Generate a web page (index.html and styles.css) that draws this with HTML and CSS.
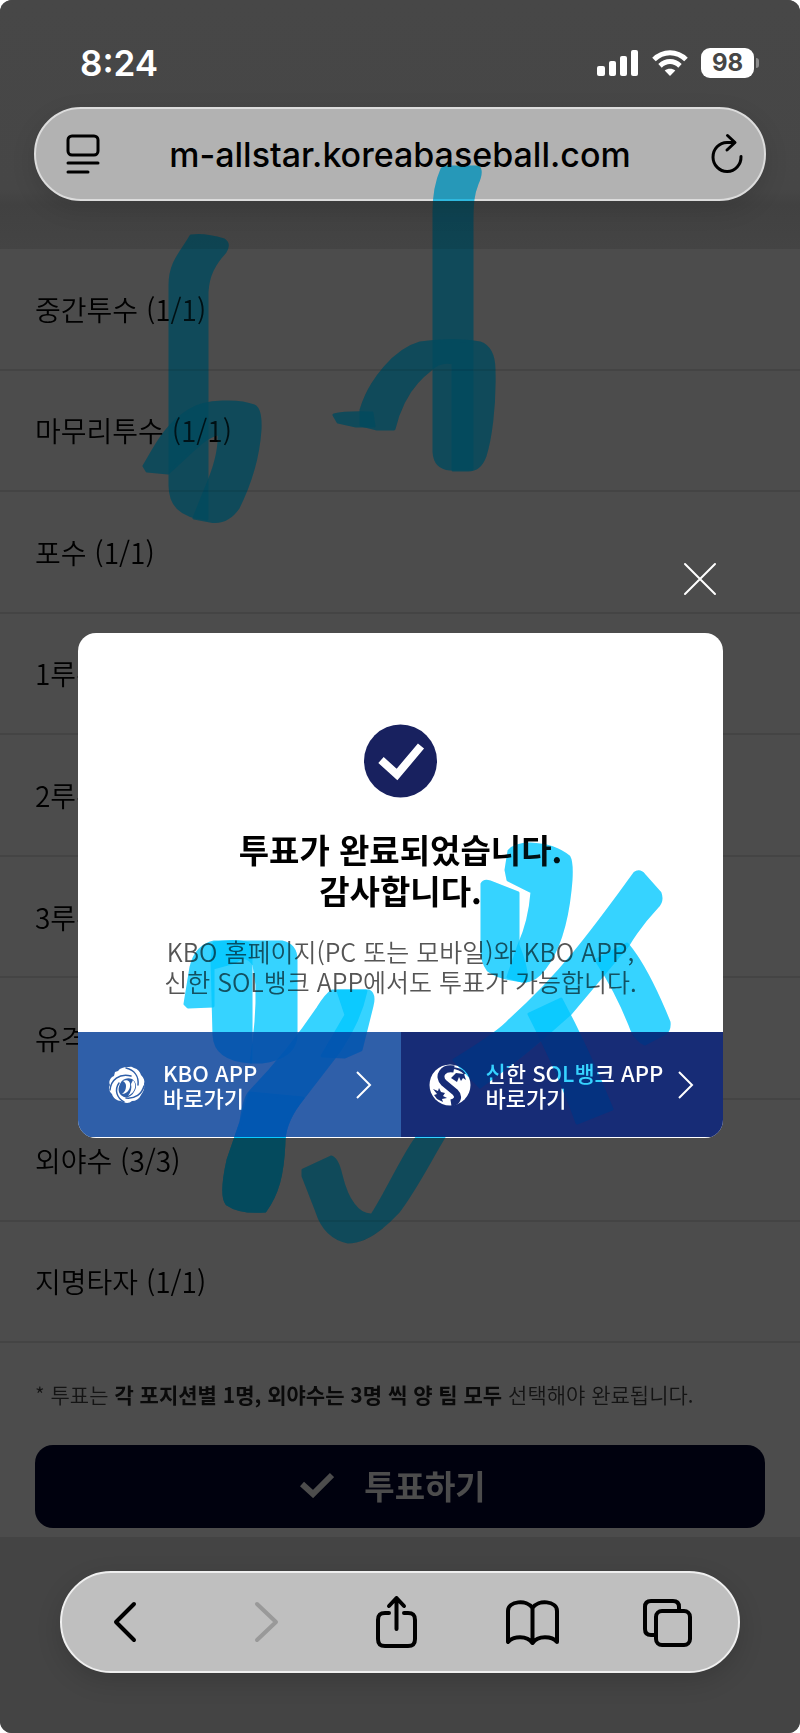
FILE: index.html
```
<!DOCTYPE html>
<html lang="ko">
<head>
    <meta charset="UTF-8">
    <meta name="viewport" content="width=device-width, initial-scale=1.0">
    <title>KBO 올스타 투표</title>
    <link rel="stylesheet" href="styles.css">
</head>
<body>
    <div class="screen">
        <!-- Status bar and address bar -->
        <header class="browser-top">
            <div class="status-bar">
                <span class="clock">8:24</span>
                <div class="status-icons">
                    <svg width="42" height="26" viewBox="0 0 42 26" fill="#fff">
                        <rect x="0" y="16" width="8" height="10" rx="2"/>
                        <rect x="12" y="11" width="7" height="15" rx="2"/>
                        <rect x="23" y="6" width="7" height="20" rx="2"/>
                        <rect x="34" y="0" width="7" height="26" rx="2"/>
                    </svg>
                    <svg width="36" height="26" viewBox="0 0 36 26" fill="none" stroke="#fff" stroke-width="5">
                        <path d="M2 9.500C11 .4 25 .4 34 9.500"/>
                        <path d="M8 15.800C14 10.200 22 10.200 28 15.800"/>
                        <path d="M18 26l-5.300-5.400c3-2.600 7.600-2.600 10.600 0z" fill="#fff" stroke="none"/>
                    </svg>
                    <div class="battery">98</div>
                </div>
            </div>
            <div class="address-bar">
                <button class="icon-btn" aria-label="페이지 설정">
                    <svg width="36" height="42" viewBox="0 0 36 42" fill="none" stroke="#000" stroke-width="3" stroke-linecap="round">
                        <rect x="2" y="3" width="30" height="19" rx="4"/>
                        <path d="M2 30h30M2 39h20"/>
                    </svg>
                </button>
                <a class="url" href="#">m-allstar.koreabaseball.com</a>
                <button class="icon-btn" aria-label="새로고침">
                    <svg width="48" height="42" viewBox="-12 0 48 42" fill="none" stroke="#000" stroke-width="3" stroke-linecap="round" stroke-linejoin="round">
                        <path d="M31 23.500A14 14.500 0 1 1 17 9.500h7"/>
                        <path d="M17.500 2.500l7.500 7-8 7.500"/>
                    </svg>
                </button>
            </div>
        </header>

        <!-- Position list -->
        <main class="vote-page">
            <ul class="position-list">
                <li>중간투수 (1/1)</li>
                <li>마무리투수 (1/1)</li>
                <li>포수 (1/1)</li>
                <li>1루수 (1/1)</li>
                <li>2루수 (1/1)</li>
                <li>3루수 (1/1)</li>
                <li>유격수 (1/1)</li>
                <li>외야수 (3/3)</li>
                <li>지명타자 (1/1)</li>
            </ul>
            <div class="vote-footer">
                <p class="vote-note">* 투표는 <b>각 포지션별 1명, 외야수는 3명 씩 양 팀 모두</b> 선택해야 완료됩니다.</p>
                <button class="vote-btn">
                    <svg width="34" height="26" viewBox="0 0 34 26" fill="none" stroke="#fff" stroke-width="6">
                        <path d="M2 12l11 10L32 3"/>
                    </svg>
                    투표하기
                </button>
            </div>
        </main>

        <!-- Vote complete popup -->
        <div class="overlay">
            <button class="close-btn" aria-label="닫기">
                <svg width="34" height="34" viewBox="0 0 34 34" fill="none" stroke="#fff" stroke-width="2" stroke-linecap="round">
                    <path d="M2 2l30 30M32 2L2 32"/>
                </svg>
            </button>
            <div class="popup" role="dialog" aria-labelledby="popupTitle">
                <div class="popup-body">
                    <svg width="74" height="74" viewBox="0 0 74 74">
                        <circle cx="36.500" cy="37" r="36.500" fill="#18215f"/>
                        <path d="M17 36l16 14.500L57 22" fill="none" stroke="#fff" stroke-width="8"/>
                    </svg>
                    <h2 id="popupTitle">투표가 완료되었습니다.<br>감사합니다.</h2>
                    <p>KBO 홈페이지(PC 또는 모바일)와 KBO APP,<br>신한 SOL뱅크 APP에서도 투표가 가능합니다.</p>
                </div>
                <div class="popup-links">
                    <a class="app-link app-kbo" href="#">
                        <svg class="app-logo" width="42" height="42" viewBox="0 0 42 42">
                            <path d="M9 8l3-1c2-3 6-4 9-4 3 0 4-1 7 1 4 1 6 4 7 7 3 3 4 6 3 9 1 5-1 8-3 11-2 4-5 6-9 6-3 3-8 2-11 0-4 0-8-3-9-7-3-3-4-6-2-9-2-4 1-8 4-9z" fill="#fff"/>
                            <path d="M14 20c2-5 7-7 12-5 5 3 5 9 2 13-2 4-6 6-10 5-5-2-7-7-4-13z" fill="#2f5fa9"/>
                            <path d="M17 17c5-2 8 1 7 6-1 4-4 7-8 7 3-2 4-5 4-8 0-2-1-4-3-5zM27 16c4 4 3 12-5 16 3-4 4-8 3-12z" fill="#fff"/>
                            <g fill="none" stroke="#2f5fa9" stroke-width="1.500" stroke-linecap="round">
                                <path d="M4 26C5 16 13 9 25 12"/>
                                <path d="M20 4c8 2 13 8 12 17"/>
                                <path d="M38 22c-2 8-9 13-18 12"/>
                                <path d="M18 38C11 34 8 26 13 19"/>
                            </g>
                        </svg>
                        <span class="app-name">KBO APP<br>바로가기</span>
                        <svg class="app-arrow" width="16" height="28" viewBox="0 0 16 28" fill="none" stroke="#fff" stroke-width="2">
                            <path d="M1 1l13 13L1 27"/>
                        </svg>
                    </a>
                    <a class="app-link app-sol" href="#">
                        <svg class="app-logo" width="42" height="42" viewBox="0 0 42 42">
                            <circle cx="21" cy="21" r="20.500" fill="#fff"/>
                            <g fill="none" stroke="#172c76">
                                <path d="M25 5C14 3 8 12 15 19l11 9c5 5 2 10-4 11" stroke-width="7"/>
                                <path d="M22 4c5 0 11 2 14 6" stroke-width="2"/>
                            </g>
                            <path d="M22 14l5-5 8 1 2 6-3-2-2 3-2-4-2 5-3-2zM4 25l5 2 1-3 2 4 4 1-2 3 4 2-5 1 1 3-6-3-3-4 3-1z" fill="#172c76"/>
                        </svg>
                        <span class="app-name">신한 SOL뱅크 APP<br>바로가기</span>
                        <svg class="app-arrow" width="16" height="28" viewBox="0 0 16 28" fill="none" stroke="#fff" stroke-width="2">
                            <path d="M1 1l13 13L1 27"/>
                        </svg>
                    </a>
                </div>
            </div>
        </div>

        <!-- Browser toolbar -->
        <footer class="browser-bottom">
            <nav class="toolbar">
                <button class="icon-btn" aria-label="뒤로">
                    <svg width="56" height="56" viewBox="0 0 56 56"><path d="M37 10L19 28l18 18"/></svg>
                </button>
                <button class="icon-btn forward" aria-label="앞으로" disabled>
                    <svg width="56" height="56" viewBox="0 0 56 56"><path d="M24 10l19 18-19 18"/></svg>
                </button>
                <button class="icon-btn" aria-label="공유">
                    <svg width="56" height="56" viewBox="0 0 56 56"><path d="M21 19h-4c-5 0-7 2-7 7v19c0 5 2 7 7 7h23c5 0 7-2 7-7V26c0-5-2-7-7-7h-4M28.500 35V4M21 12l7.500-8 7.500 8"/></svg>
                </button>
                <button class="icon-btn" aria-label="북마크">
                    <svg width="56" height="56" viewBox="0 0 56 56"><path d="M28.500 14v35M4 48V17c0-10 19-12 24.500-3C34 5 53 7 53 17v31c-5-6-19-7-24.500 1C23 41 9 42 4 48z"/></svg>
                </button>
                <button class="icon-btn" aria-label="탭">
                    <svg width="56" height="56" viewBox="0 0 56 56"><rect x="17" y="17" width="34" height="34" rx="6"/><path d="M16 41h-4c-4 0-6-2-6-6V13c0-4 2-6 6-6h22c4 0 6 2 6 6v3"/></svg>
                </button>
            </nav>
        </footer>

        <!-- Highlighter strokes drawn over the screen -->
        <svg class="marker marker-ink" viewBox="0 0 800 1733" aria-hidden="true">
            <g id="strokes">
                <path d="M191 236Q205 234 224 240Q230 244 225 252C214 264 208 275 207 292V519Q187 517 178 508Q170 500 170 485V285C170 262 182 252 191 236Z"/>
                <path d="M144 466C155 448 165 425 190 410C205 400 240 400 254 406Q261 409 260 430C258 460 248 488 238 508Q227 524 210 521L194 518L206 488C214 470 220 450 219 434C205 435 190 454 168 473L147 471Z"/>
                <path d="M447 167H478Q483 170 477 184C473 194 472 202 472 222V469H450Q435 468 434 452V212C434 192 438 178 442 169Z"/>
                <path d="M361 410C370 380 395 350 420 343Q455 338 480 343Q494 348 494 370C495 408 490 440 485 456Q480 470 468 470H453V363Q440 360 430 370C410 385 399 408 394 429H377L361 425Z"/>
                <path d="M334 415Q345 412 372 413L374 426L356 426L338 422Z"/>
                <path d="M214 943Q240 939 251 945V1062Q215 1060 214 1035L212 960Z"/>
                <path d="M185 1004L191 967Q196 946 214 942H282Q296 945 296 960V1038Q293 1058 262 1062L251 1062Q258 1020 257 985L254 965Q246 952 235 962L213 968V1006L188 1007Z"/>
                <path d="M332 991H366Q360 1020 340 1050L303 1098Q285 1120 284 1140C283 1175 277 1195 265 1211Q240 1213 227 1204Q220 1196 228 1160L241 1122Q244 1098 250 1092Q290 1050 318 1008Q326 995 332 991Z"/>
                <path d="M338 991H369Q375 994 372 1006L361 1050L345 1057L322 1056L346 1015Z"/>
                <path d="M250 1093L303 1098Q285 1120 284 1140C283 1175 277 1195 265 1211Q240 1213 227 1204Q220 1196 228 1160L241 1122Z"/>
                <path d="M303 1170L331 1157Q337 1158 341 1175C347 1200 358 1216 372 1215C388 1190 402 1158 417 1137H444C430 1160 415 1190 398 1212Q370 1242 348 1242Q325 1237 317 1212L303 1176Z"/>
                <path d="M482 884Q484 880 490 882L518 893V945Q528 970 526 981Q500 979 488 970Q481 960 482 945Z"/>
                <path d="M506 870L509 851Q515 844 530 844Q555 845 569 857Q572 862 571 880C568 920 559 950 544 969Q535 982 522 981L508 977L519 945C528 925 531 905 532 892L508 880Z"/>
                <path d="M635 873Q640 870 644 875L660 893Q663 901 657 907Q640 925 628 945L570 1014Q525 1055 480 1087L454 1060Q500 1032 510 1020C560 975 590 935 635 873Z"/>
                <path d="M596 960L627 944C645 965 660 1000 669 1022Q670 1031 664 1034L645 1044Q635 1040 630 1025C618 995 606 975 596 960Z"/>
                <path d="M529 1014L561 999C575 1025 590 1055 612 1109L577 1123Q560 1075 529 1014Z"/>
            </g>
        </svg>
        <svg class="marker marker-glow" viewBox="0 0 800 1733" aria-hidden="true">
            <use href="#strokes"/>
        </svg>
    </div>
</body>
</html>
```
FILE: styles.css
```
* {
    margin: 0;
    padding: 0;
    box-sizing: border-box;
}

body {
    background-color: #fff;
    font-family: "Noto Sans CJK KR", sans-serif;
    color: #000;
}

button {
    border: none;
    background: none;
    font: inherit;
    color: inherit;
    cursor: pointer;
}

a {
    color: inherit;
    text-decoration: none;
}

svg {
    display: block;
    flex-shrink: 0;
}

.screen {
    position: relative;
    display: flex;
    flex-direction: column;
    min-height: 100vh;
    border-radius: 12px;
    overflow: hidden;
    isolation: isolate;
    background-color: #fff;
}

/* Browser chrome */
.browser-top {
    position: relative;
    z-index: 2;
    height: 249px;
    padding: 40px 34px 0;
    background: linear-gradient(#474747 0, #464646 190px, #414141 205px, #444 100%);
    font-family: Inter, sans-serif;
}

.status-bar {
    display: flex;
    justify-content: space-between;
    align-items: center;
    height: 46px;
    padding: 0 8px 0 46px;
    color: #fff;
}

.clock {
    font-size: 35px;
    font-weight: 600;
}

.status-icons {
    display: flex;
    align-items: center;
    gap: 13px;
}

.battery {
    position: relative;
    width: 53px;
    height: 30px;
    margin-right: 4px;
    border-radius: 9px;
    background-color: #fff;
    color: #464646;
    font-size: 24px;
    font-weight: 700;
    line-height: 30px;
    text-align: center;
}

.battery::after {
    content: "";
    position: absolute;
    right: -5px;
    top: 10px;
    width: 3px;
    height: 10px;
    border-radius: 0 4px 4px 0;
    background-color: #8b8b8b;
}

.address-bar {
    display: flex;
    justify-content: space-between;
    align-items: center;
    height: 94px;
    margin-top: 21px;
    padding: 0 18px 0 30px;
    border: 2px solid #dcdcdc;
    border-radius: 47px;
    background-color: #b2b2b2;
    box-shadow: 0 8px 24px rgba(0, 0, 0, 0.12);
}

.url {
    font-size: 34px;
    font-weight: 500;
}

.browser-bottom {
    position: relative;
    z-index: 2;
    padding: 34px 60px 60px;
    background-color: #444;
}

.toolbar {
    display: flex;
    justify-content: space-between;
    align-items: center;
    height: 102px;
    padding: 0 43px 0 35px;
    border: 2px solid #efefef;
    border-radius: 51px;
    background-color: #bfbfbf;
    box-shadow: 0 8px 24px rgba(0, 0, 0, 0.15);
}

.toolbar svg {
    fill: none;
    stroke: #000;
    stroke-width: 4;
    stroke-linecap: round;
    stroke-linejoin: round;
}

.toolbar .forward svg {
    stroke: #999;
}

/* Vote page */
.vote-page {
    flex: 1;
    display: flex;
    flex-direction: column;
}

.position-list {
    flex: 1;
    display: flex;
    flex-direction: column;
    list-style: none;
    font-size: 28px;
    font-weight: 350;
}

.position-list li {
    flex: 1;
    display: flex;
    align-items: center;
    padding: 0 35px;
    border-bottom: 2px solid #e4e4e4;
}

.vote-footer {
    padding: 34px 35px 9px;
}

.vote-note {
    margin-bottom: 34px;
    color: #444;
    font-size: 21px;
    font-weight: 350;
    line-height: 34px;
    white-space: nowrap;
}

.vote-note b {
    color: #222;
    font-weight: 700;
}

.vote-btn {
    display: flex;
    justify-content: center;
    align-items: center;
    gap: 30px;
    width: 100%;
    height: 83px;
    padding: 0 14px 4px 0;
    border-radius: 18px;
    background-color: #020530;
    color: #fff;
    font-size: 33px;
    font-weight: 700;
}

/* Popup */
.overlay {
    position: absolute;
    inset: 0;
    z-index: 1;
    padding: 562px 77px 0 78px;
    background-color: rgba(0, 0, 0, 0.7);
}

.close-btn {
    display: block;
    margin: 0 6px 37px auto;
}

.popup {
    padding-bottom: 1px;
    border-radius: 18px;
    background-color: #fff;
    overflow: hidden;
}

.popup-body {
    display: flex;
    flex-direction: column;
    align-items: center;
    padding: 91px 20px 36px;
    text-align: center;
}

.popup-body h2 {
    margin-top: 31px;
    font-size: 33px;
    font-weight: 700;
    line-height: 41px;
}

.popup-body p {
    margin-top: 25px;
    color: #555;
    font-size: 25px;
    font-weight: 350;
    line-height: 30px;
    white-space: nowrap;
}

.popup-links {
    display: grid;
    grid-template-columns: 1fr 1fr;
    color: #fff;
}

.app-link {
    display: flex;
    align-items: center;
    height: 105px;
    padding: 0 29px 0 28px;
}

.app-kbo {
    background-color: #2f5fa9;
}

.app-sol {
    background-color: #172c76;
}

.app-name {
    margin-left: 15px;
    font-size: 22px;
    font-weight: 500;
    line-height: 25px;
    white-space: nowrap;
}

.app-arrow {
    margin-left: auto;
}

/* Highlighter */
.marker {
    position: absolute;
    inset: 0;
    z-index: 3;
    width: 100%;
    pointer-events: none;
}

.marker path {
    fill: #00c8ff;
    stroke: #00c8ff;
    stroke-width: 3;
    stroke-linejoin: round;
    opacity: 0.77;
}

.marker-ink {
    mix-blend-mode: multiply;
}

.marker-glow {
    opacity: 0.1;
}
```
